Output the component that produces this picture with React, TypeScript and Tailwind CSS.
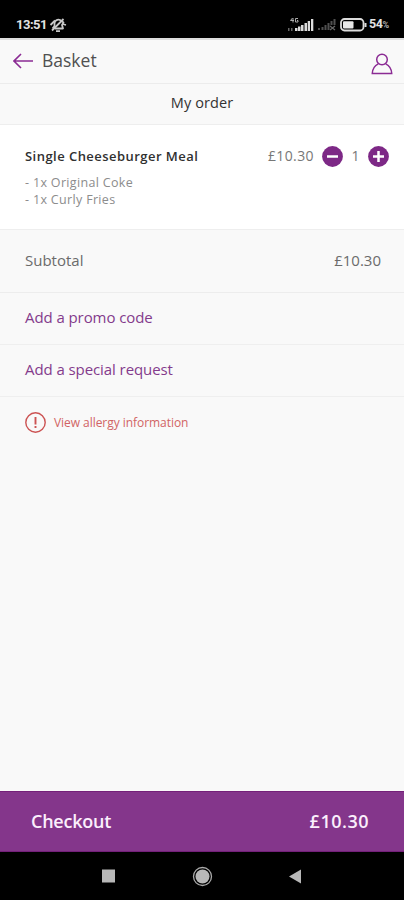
import type { ReactNode } from 'react'

function MutedIcon() {
  return (
    <svg className="w-[18px] h-[18px]" viewBox="0 0 18 18" fill="none" stroke="#c8c8c8" strokeWidth="1.8">
      <path d="M3.500 12.500 5.500 10V7.500A4 4 0 0 1 11 4L14.500 6.500 13 9 14 12.500H6" strokeLinejoin="round" />
      <path d="M1.500 9 6 4.500M3 14.500 14.500 3M7 15.200h4M13.500 8l3.500 1" />
    </svg>
  )
}

function SignalIcon() {
  return (
    <svg className="w-[26px] h-[15px]" viewBox="0 0 26 15">
      <path d="M0 11h1.500v3H0zM3 11h1.500v3H3z" fill="#666" />
      <path d="M4.500 1 2.500 3.500h3.500M5 1v4.500M10 1.500H7.500v3.500H10V3.500H9" stroke="#aaa" fill="none" />
      <path d="M7 11h2.500v3H7zM10 9.500h2.500V14H10zM13 8h2.500v6H13zM16.500 6H19v8h-2.500zM19.700 4h2.300v10h-2.300zM23 2h2.300v12H23z" fill="#dcdcdc" />
    </svg>
  )
}

function NoSignalIcon() {
  return (
    <svg className="w-[19px] h-[13px]" viewBox="0 0 19 13" fill="#505050">
      <path d="M1 10h2v2H1zM4.500 9h2v3h-2zM7.500 7h2v5h-2zM10.500 5h2v7h-2zM13.500 3h2v4h-2zM16.500 1h2v6h-2z" />
      <path d="m13 8 5 4m0-4-5 4" stroke="#666" strokeWidth="1.300" />
    </svg>
  )
}

function BatteryIcon() {
  return (
    <svg className="w-[27px] h-[14px]" viewBox="0 0 27 14">
      <rect x="1" y="1" width="22.500" height="11.500" rx="3.500" fill="none" stroke="#dcdcdc" strokeWidth="1.800" />
      <rect x="3" y="3.200" width="10.500" height="7.200" rx="1" fill="#e8e8e8" />
      <path d="M24.500 5h2v4h-2z" fill="#ddd" />
    </svg>
  )
}

function BackIcon() {
  return (
    <svg className="w-5 h-4" viewBox="0 0 20 16" fill="none" stroke="#8b2b94" strokeWidth="1.600">
      <path d="M8 1 1 8l7 7M1 8h19" />
    </svg>
  )
}

function UserIcon() {
  return (
    <svg className="w-[22px] h-[22px]" viewBox="0 0 22 22" fill="none" stroke="#8b2b94" strokeWidth="1.500">
      <circle cx="11" cy="6.500" r="5.300" />
      <path d="M7.300 10.800C3.800 12.500 1.500 16 1.300 20.400h19.400C20.500 16 18.200 12.500 14.700 10.800" />
    </svg>
  )
}

function RoundButton({ label, d }: { label: string; d: string }) {
  return (
    <button aria-label={label} className="block w-[21px] h-[21px]">
      <svg className="w-full h-full" viewBox="0 0 21 21">
        <circle cx="10.500" cy="10.500" r="10.400" fill="#7d2886" />
        <path d={d} stroke="#fff" strokeWidth="2.500" />
      </svg>
    </button>
  )
}

function LinkRow({ children }: { children: ReactNode }) {
  return (
    <button className="flex items-center w-full h-[52px] pl-[25px] pb-[2px] border-b border-[#efefef] text-[15px] tracking-[-0.08px] text-[#843b8c]">
      {children}
    </button>
  )
}

export default function App() {
  return (
    <div className="flex flex-col w-[404px] h-[900px] overflow-hidden bg-[#f9f9f9] font-['Open_Sans',sans-serif]">
      {/* Status bar */}
      <div className="flex items-start h-[38px] shrink-0 bg-black pl-4 pt-4 font-['Roboto',sans-serif] text-[#e2e2e2]">
        <span className="text-[13px] leading-[18px] font-bold w-[33px] tracking-[-0.5px]">13:51</span>
        <MutedIcon />
        <div className="flex items-center h-[17px] ml-[221px]">
          <SignalIcon />
          <span className="ml-[3px] flex"><NoSignalIcon /></span>
          <span className="ml-1 flex"><BatteryIcon /></span>
          <span className="ml-[2px] text-[12.500px] font-bold tracking-[-0.4px]">54<span className="text-[9px] text-[#b0b0b0]">%</span></span>
        </div>
      </div>

      {/* Header */}
      <header className="flex items-center justify-between h-[46px] shrink-0 border-t-2 border-b border-t-[#dedede] border-b-[#ececec] pl-[13px] pr-[11px]">
        <div className="flex items-center pb-[2px]">
          <BackIcon />
          <h1 className="ml-[9px] text-[17.500px] text-[#505050]">Basket</h1>
        </div>
        <span className="mt-[4px]"><UserIcon /></span>
      </header>
      <div className="flex items-center justify-center h-[41px] shrink-0 border-b border-[#eee] pb-[2px] text-[14.500px] tracking-[0.1px] text-[#333]">
        <span>My order</span>
      </div>

      {/* Item */}
      <section className="h-[105px] shrink-0 bg-white border-b border-[#eee] pl-[25px] pr-[15px] pt-[20px]">
        <div className="flex items-center justify-between h-[22px]">
          <h2 className="mt-[2px] text-[13px] tracking-[0.46px] font-semibold text-[#303030] whitespace-nowrap">Single Cheeseburger Meal</h2>
          <div className="flex items-center text-[14px] text-[#777]">
            <span className="mr-[8px] pb-[2px] tracking-[0.4px]">£10.30</span>
            <RoundButton label="Remove one" d="M5 10.500h11" />
            <span className="w-[25px] pb-[2px] text-center">1</span>
            <RoundButton label="Add one" d="M5 10.500h11M10.500 5v11" />
          </div>
        </div>
        <ul className="mt-[8px] text-[12.500px] leading-[16.500px] tracking-[0.33px] text-[#8c8c8c]">
          <li>- 1x Original Coke</li>
          <li>- 1x Curly Fries</li>
        </ul>
      </section>

      <div className="flex items-center justify-between h-[63px] shrink-0 border-b border-[#ededed] pl-[25px] pr-[23px] pb-[2px] text-[15px] text-[#6b6b6b]">
        <span>Subtotal</span>
        <span>£10.30</span>
      </div>
      <LinkRow>Add a promo code</LinkRow>
      <LinkRow>Add a special request</LinkRow>

      {/* Allergy information */}
      <button className="flex items-center h-[52px] pl-[25px] pb-px text-[12px] tracking-[-0.05px] text-[#d16464]">
        <svg className="w-[21px] h-[21px] mr-2" viewBox="0 0 21 21" fill="none" stroke="#cc5353">
          <circle cx="10.500" cy="10.500" r="9.700" strokeWidth="1.400" />
          <path d="M10.500 5v7.500M10.500 14v2" strokeWidth="1.900" />
        </svg>
        View allergy information
      </button>

      {/* Checkout */}
      <button className="flex items-center justify-between h-[61px] shrink-0 mt-auto bg-[#84368b] border-y border-y-[#742079] pl-[31px] pr-[35px] text-[18px] font-semibold text-[#fbeffc]">
        <span className="tracking-[-0.25px]">Checkout</span>
        <span className="tracking-[0.5px]">£10.30</span>
      </button>

      {/* System navigation */}
      <nav className="h-12 shrink-0 bg-black">
        <svg className="w-full h-full" viewBox="0 0 404 48">
          <rect x="102" y="17.500" width="13" height="13" fill="#b8b8b8" />
          <circle cx="202.500" cy="24.500" r="9" fill="none" stroke="#aaa" strokeWidth="1.300" />
          <circle cx="202.500" cy="24.500" r="7" fill="#b8b8b8" />
          <path d="M289 24.500 301 17.500v14z" fill="#b8b8b8" />
        </svg>
      </nav>
    </div>
  )
}
